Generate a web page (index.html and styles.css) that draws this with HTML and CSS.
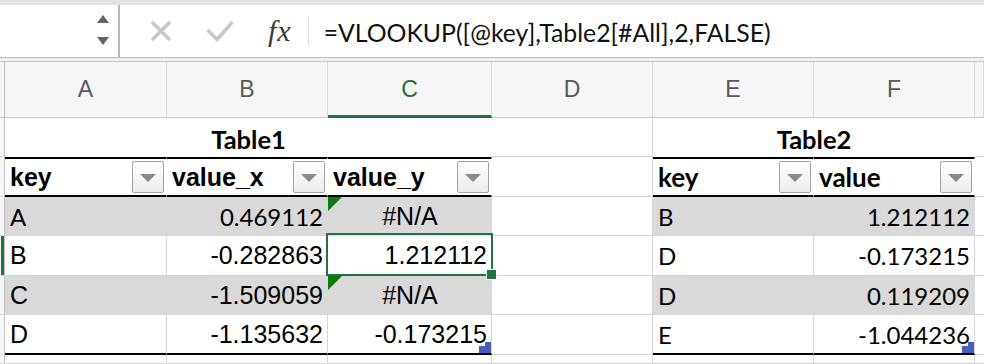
FILE: index.html
```html
<!DOCTYPE html>
<html lang="en">
<head>
    <meta charset="UTF-8">
    <title>VLOOKUP Table1 / Table2</title>
    <link rel="stylesheet" href="styles.css">
</head>
<body>
    <div class="strip"></div>
    <div class="formula-bar">
        <div class="name-box">
            <svg class="stepper" width="12" height="32" viewBox="0 0 12 32">
                <polygon points="6,0 12,8 0,8" fill="#646464"/>
                <polygon points="0,22 12,22 6,30" fill="#646464"/>
            </svg>
        </div>
        <svg class="btn-cancel" width="22" height="22" viewBox="0 0 22 22">
            <path d="M2 2 L20 20 M20 2 L2 20" stroke="#c9c9c9" stroke-width="3.6" fill="none"/>
        </svg>
        <svg class="btn-enter" width="28" height="22" viewBox="0 0 28 22">
            <polyline points="1.5,10 11,19.5 26.5,2" stroke="#c9c9c9" stroke-width="3.6" fill="none"/>
        </svg>
        <span class="fx">fx</span>
        <span class="bar-sep"></span>
        <span class="formula">=VLOOKUP([@key],Table2[#All],2,FALSE)</span>
    </div>
    <div class="bar-gap"></div>

    <div class="sheet">
        <!-- column headings -->
        <div class="corner"></div>
        <div class="colhead">A</div>
        <div class="colhead">B</div>
        <div class="colhead active">C</div>
        <div class="colhead">D</div>
        <div class="colhead">E</div>
        <div class="colhead">F</div>
        <div class="colhead"></div>

        <!-- row 1: table titles -->
        <div class="rowhead"></div>
        <div class="cell title span3">Table1</div>
        <div class="cell"></div>
        <div class="cell title span2">Table2</div>
        <div class="cell"></div>

        <!-- row 2: table headers -->
        <div class="rowhead"></div>
        <div class="cell th">key<span class="dd"></span></div>
        <div class="cell th">value_x<span class="dd"></span></div>
        <div class="cell th">value_y<span class="dd"></span></div>
        <div class="cell"></div>
        <div class="cell th cal">key<span class="dd"></span></div>
        <div class="cell th cal">value<span class="dd"></span></div>
        <div class="cell"></div>

        <!-- row 3 -->
        <div class="rowhead"></div>
        <div class="cell band cal">A</div>
        <div class="cell band cal num">0.469112</div>
        <div class="cell band mid err">#N/A</div>
        <div class="cell"></div>
        <div class="cell band cal">B</div>
        <div class="cell band cal num">1.212112</div>
        <div class="cell"></div>

        <!-- row 4 -->
        <div class="rowhead active"></div>
        <div class="cell">B</div>
        <div class="cell num">-0.282863</div>
        <div class="cell num sel">1.212112<span class="handle"></span></div>
        <div class="cell"></div>
        <div class="cell cal">D</div>
        <div class="cell cal num">-0.173215</div>
        <div class="cell"></div>

        <!-- row 5 -->
        <div class="rowhead"></div>
        <div class="cell band">C</div>
        <div class="cell band num">-1.509059</div>
        <div class="cell band mid err">#N/A</div>
        <div class="cell"></div>
        <div class="cell band cal">D</div>
        <div class="cell band cal num">0.119209</div>
        <div class="cell"></div>

        <!-- row 6 -->
        <div class="rowhead"></div>
        <div class="cell last">D</div>
        <div class="cell last num">-1.135632</div>
        <div class="cell last num">-0.173215<svg class="resize" width="12" height="11" viewBox="0 0 12 11"><polygon points="6,0 12,0 12,11 0,11 0,4 6,4" fill="#4b5bb8"/></svg></div>
        <div class="cell"></div>
        <div class="cell last cal">E</div>
        <div class="cell last cal num">-1.044236<svg class="resize" width="12" height="11" viewBox="0 0 12 11"><polygon points="6,0 12,0 12,11 0,11 0,4 6,4" fill="#4b5bb8"/></svg></div>
        <div class="cell"></div>

        <!-- row 7 (partly visible) -->
        <div class="rowhead"></div>
        <div class="cell"></div>
        <div class="cell"></div>
        <div class="cell"></div>
        <div class="cell"></div>
        <div class="cell"></div>
        <div class="cell"></div>
        <div class="cell"></div>
    </div>
</body>
</html>
```

FILE: styles.css
```css
body {
    margin: 0;
    width: 984px;
    height: 364px;
    overflow: hidden;
    background-color: #fff;
    font-family: "Liberation Sans", Arial, sans-serif;
    color: #000;
}

.strip {
    height: 5px;
    background-color: #e4e4e4;
}

/* formula bar */
.formula-bar {
    display: flex;
    align-items: center;
    box-sizing: border-box;
    height: 53px;
    border-bottom: 1px solid #bdbdbd;
}

.name-box {
    box-sizing: border-box;
    width: 120px;
    height: 100%;
    border-right: 2px solid #b9b9b9;
    display: flex;
    align-items: center;
    justify-content: flex-end;
    padding-right: 9px;
}

.btn-cancel {
    margin-left: 30px;
}

.btn-enter {
    margin-left: 34px;
}

.fx {
    margin-left: 34px;
    font-family: "Liberation Serif", serif;
    font-style: italic;
    font-size: 30px;
    color: #3a3a3a;
    letter-spacing: 1px;
}

.bar-sep {
    width: 1px;
    height: 28px;
    margin-left: 16px;
    background-color: #dcdcdc;
}

.formula {
    margin-left: 15px;
    padding-top: 3px;
    font-family: Lato, "Liberation Sans", sans-serif;
    font-size: 24.8px;
    color: #111;
}

.bar-gap {
    height: 3px;
    background-color: #f1f1f1;
    border-bottom: 1px solid #c9c9c9;
}

/* grid */
.sheet {
    display: grid;
    grid-template-columns: 5px 162px 161px 164px 161px 161px 161px 9px;
    grid-template-rows: 56px 39px 40px 39px 40px 39px 40px 9px;
}

.corner,
.colhead {
    box-sizing: border-box;
    background-color: #f6f6f6;
    border-right: 1px solid #d9d9d9;
    border-bottom: 1px solid #c6c6c6;
}

.corner {
    border-right-color: #bfbfbf;
}

.colhead {
    display: flex;
    align-items: center;
    justify-content: center;
    font-size: 23px;
    color: #595959;
}

.colhead.active {
    color: #1e6e42;
    border-bottom: 3px solid #217346;
    padding-top: 2px;
}

.rowhead {
    box-sizing: border-box;
    background-color: #f6f6f6;
    border-right: 1px solid #bfbfbf;
    border-bottom: 1px solid #dcdcdc;
}

.rowhead.active {
    box-shadow: inset -3px 0 #217346;
}

.cell {
    box-sizing: border-box;
    position: relative;
    display: flex;
    align-items: center;
    padding: 0 4px 0 5px;
    border-right: 1px solid #d6d6d6;
    border-bottom: 1px solid #d6d6d6;
    font-size: 25px;
    white-space: nowrap;
}

.cal {
    font-family: Lato, "Liberation Sans", sans-serif;
    font-size: 24px;
}

.num {
    justify-content: flex-end;
}

.mid {
    justify-content: center;
}

.band {
    background-color: #d9d9d9;
    border-color: transparent;
}

.title {
    justify-content: center;
    font-family: Lato, "Liberation Sans", sans-serif;
    font-weight: bold;
    font-size: 25.5px;
    border-right-color: transparent;
    border-bottom: 0;
    padding-top: 3px;
}

.span3 {
    grid-column: span 3;
}

.span2 {
    grid-column: span 2;
}

.th {
    font-weight: bold;
    border-top: 2px solid #000;
    border-bottom: 2px solid #000;
    border-right-color: transparent;
    padding-right: 2px;
}

.th.cal {
    font-size: 26px;
}

.dd {
    box-sizing: border-box;
    width: 32px;
    height: 32px;
    margin-left: auto;
    border: 1px solid #a3a3a3;
    border-radius: 2px;
    background: linear-gradient(#fefefe, #ededed);
    display: flex;
    align-items: center;
    justify-content: center;
}

.dd::before {
    content: "";
    border-left: 8px solid transparent;
    border-right: 8px solid transparent;
    border-top: 8px solid #8a8a8a;
    margin-top: 2px;
}

.last {
    border-bottom: 2px solid #000;
}

/* error indicator */
.err::before {
    content: "";
    position: absolute;
    top: 0;
    left: 0;
    border-top: 14px solid #0b7b0b;
    border-right: 14px solid transparent;
}

/* active cell */
.sel {
    z-index: 2;
}

.sel::after {
    content: "";
    position: absolute;
    top: -3px;
    left: -2px;
    right: -2px;
    bottom: -1px;
    border: 2px solid #217346;
}

.handle {
    position: absolute;
    right: -6px;
    bottom: -5px;
    width: 9px;
    height: 9px;
    background-color: #217346;
    border: 1px solid #fff;
    z-index: 3;
}

.resize {
    position: absolute;
    right: 0;
    bottom: 0;
}
```
